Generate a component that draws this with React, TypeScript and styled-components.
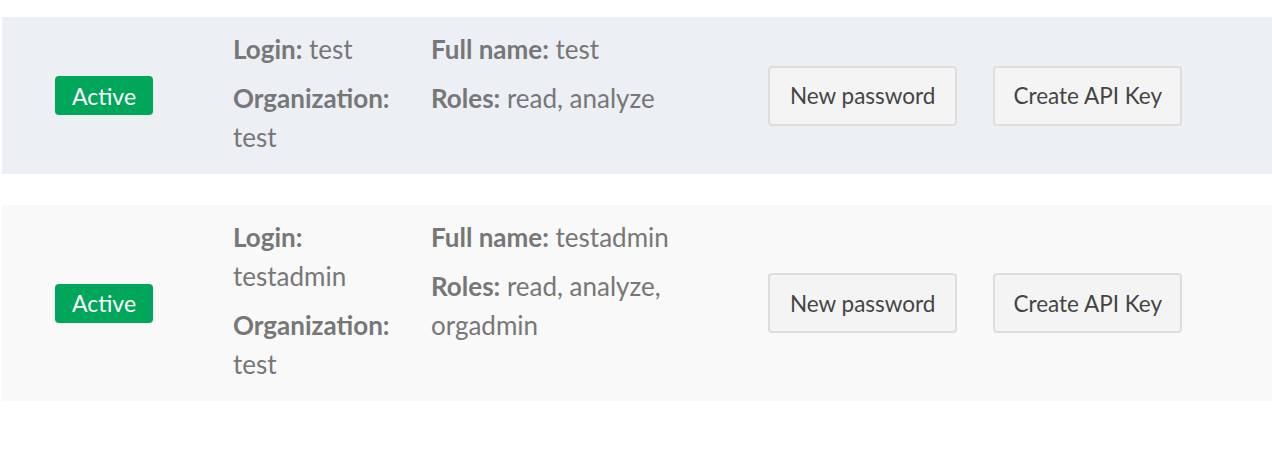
import React from "react";
import styled, { createGlobalStyle } from "styled-components";

const Global = createGlobalStyle`
  html, body { margin: 0; padding: 0; background: #ffffff; }
  body { font-family: Lato, "Open Sans", sans-serif; }
`;

const Page = styled.div`
  padding: 17px 0 0 2px;
  display: flex;
  flex-direction: column;
  gap: 31px;
`;

const UserRow = styled.div<{ $bg: string }>`
  display: grid;
  grid-template-columns: 231px 198px 337px auto;
  align-items: center;
  background: ${(p) => p.$bg};
`;

const StatusCell = styled.div`
  padding-right: 27px;
  display: flex;
  justify-content: center;
`;

const Badge = styled.span`
  display: inline-flex;
  align-items: center;
  justify-content: center;
  width: 98px;
  height: 39px;
  box-sizing: border-box;
  border-radius: 4px;
  background: #00a65a;
  color: #ffffff;
  font-size: 23px;
`;

const InfoCell = styled.div<{ $pr: number }>`
  align-self: stretch;
  padding: 13px ${(p) => p.$pr}px 17px 0;
  display: flex;
  flex-direction: column;
  gap: 10px;
`;

const Field = styled.div`
  margin: 0;
  font-size: 26px;
  line-height: 39px;
  color: #777777;
`;

const Label = styled.b`
  font-weight: 700;
`;

const Actions = styled.div`
  display: flex;
  gap: 36px;
`;

const Button = styled.button<{ $px: number }>`
  height: 60px;
  padding: 0 ${(p) => p.$px}px;
  box-sizing: border-box;
  background: #f4f4f4;
  border: 2px solid #dddddd;
  border-radius: 4px;
  color: #444444;
  font-family: inherit;
  font-size: 22.5px;
  cursor: pointer;
`;

type User = {
  login: string;
  org: string;
  name: string;
  roles: string;
  bg: string;
};

const users: User[] = [
  { login: "test", org: "test", name: "test", roles: "read, analyze", bg: "#ecf0f5" },
  { login: "testadmin", org: "test", name: "testadmin", roles: "read, analyze, orgadmin", bg: "#f9f9f9" },
];

export default function App() {
  return (
    <>
      <Global />
      <Page>
        {users.map((u) => (
          <UserRow key={u.login} $bg={u.bg}>
            <StatusCell>
              <Badge>Active</Badge>
            </StatusCell>
            <InfoCell $pr={18}>
              <Field>
                <Label>Login:</Label> {u.login}
              </Field>
              <Field>
                <Label>Organization:</Label> {u.org}
              </Field>
            </InfoCell>
            <InfoCell $pr={47}>
              <Field>
                <Label>Full name:</Label> {u.name}
              </Field>
              <Field>
                <Label>Roles:</Label> {u.roles}
              </Field>
            </InfoCell>
            <Actions>
              <Button $px={20}>New password</Button>
              <Button $px={18}>Create API Key</Button>
            </Actions>
          </UserRow>
        ))}
      </Page>
    </>
  );
}
